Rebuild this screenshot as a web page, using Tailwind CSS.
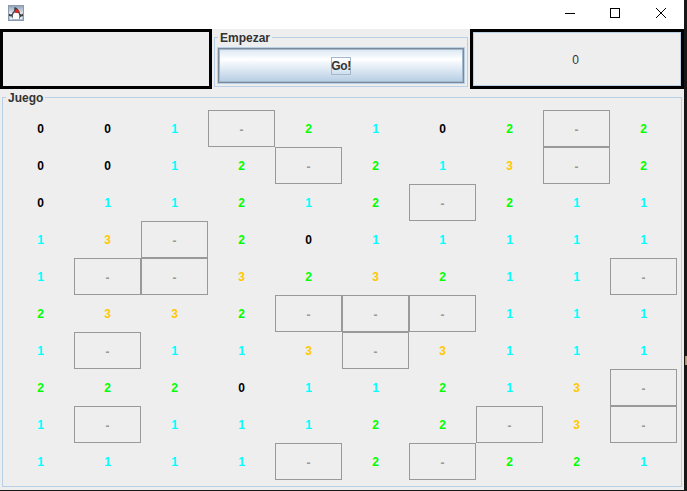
<!DOCTYPE html>
<html lang="es">
<head>
<meta charset="utf-8">
<title>Juego</title>
<script src="https://cdn.jsdelivr.net/npm/@tailwindcss/browser@4"></script>
</head>
<body class="w-[687px] h-[491px] overflow-hidden bg-[#171717] font-['Liberation_Sans',Arial,sans-serif] text-[12px] leading-[14px] text-[#333333]">
<div class="flex">
  <div class="w-[684px] h-[490px] bg-[#eeeeee] flex flex-col">
    <header class="h-[29px] shrink-0 bg-white flex justify-between pl-2">
      <svg class="w-4 h-4 mt-[5px]" viewBox="0 0 16 16">
        <defs><linearGradient id="g" x1="0" y1="0" x2="0" y2="1"><stop offset="0" stop-color="#8fa3b9"/><stop offset=".5" stop-color="#dde3ea"/><stop offset="1" stop-color="#9fb2c6"/></linearGradient></defs>
        <rect x=".5" y=".5" width="15" height="15" fill="url(#g)" stroke="#8a9bb0"/>
        <path d="M6.5 2L9 3L11.5 6.5L12 9L14 9.5L15 8.5V11L12.5 12L12 13.5H4.5L4 11.5L1 11V9L3.5 8.5L6 6Z" fill="#3c3f44"/>
        <path d="M6 7.5L10.5 8L11.5 11L11 14L5 14L4.8 10.5Z" fill="#fbfbfb"/>
        <path d="M1.5 8L3.5 7.5L4.5 9L2.5 9.5ZM2 12L5 13L4 14.5H2ZM12 12.5L14 11.5V14H12Z" fill="#eef1f5"/>
        <ellipse cx="8.8" cy="6.2" rx="2" ry="1.9" fill="#e52520"/>
      </svg>
      <svg class="w-[138px] h-[29px]" viewBox="0 0 138 29" fill="none" stroke="#000" shape-rendering="crispEdges">
        <path d="M19 13.5H29"/>
        <rect x="64.5" y="8.5" width="9" height="9"/>
        <path d="M110 8L120 18M120 8L110 18" shape-rendering="auto"/>
      </svg>
    </header>
    <section class="flex h-[60px] shrink-0">
      <div class="w-[212px] border-[3px] border-black"></div>
      <div class="w-[258px] px-[2px] pt-[8px] pb-[2px]">
        <fieldset class="relative w-[254px] h-[50px] border border-[#b8cfe5] pl-[2px] pt-[9px]">
          <div class="absolute left-[3px] -top-[7px] bg-[#eeeeee] px-[2px] font-bold">Empezar</div>
          <button class="w-[248px] h-[37px] border border-[#b8cfe5] font-bold">
            <span class="flex w-full h-full border border-[#7a8a99]">
              <span class="flex items-center justify-center w-full h-full border border-[#a3b8cc] bg-linear-to-b from-[#dde8f3] via-white via-30% to-[#b8cfe5]">
                <span class="flex items-center justify-center w-[20px] h-[18px] border border-[#a3b8cc] tracking-[-0.3px]">Go!</span>
              </span>
            </span>
          </button>
        </fieldset>
      </div>
      <div class="w-[214px] border-[3px] border-black"><div class="w-full h-full border border-[#b8cfe5] flex items-center justify-center pr-[3px] pt-[2px]">0</div></div>
    </section>
    <main class="pt-[8px] pl-[2px]">
      <fieldset class="relative w-[680px] h-[390px] border border-[#b8cfe5] pl-[4px] pt-[12px]">
        <div class="absolute left-[3px] -top-[7px] bg-[#eeeeee] px-[2px] font-bold">Juego</div>
        <div id="board" class="grid grid-cols-[repeat(10,67px)] grid-rows-[repeat(10,37px)] font-bold"></div>
      </fieldset>
    </main>
  </div>
  <div class="w-[3px] h-[491px] pl-px pt-[356px]"><div class="w-[2px] h-[9px] bg-linear-to-r from-[#6d86a3] to-[#d9ad72]"></div></div>
</div>
<script>
// One string per board row; "-" is a covered cell.
const board = [
  "001-2102-2",
  "0012-213-2",
  "011212-211",
  "13-2011111",
  "1--323211-",
  "2332---111",
  "1-113-3111",
  "222011213-",
  "1-11122-3-",
  "1111-2-221"
];
const styles = {
  "0": "flex items-center justify-center text-black",
  "1": "flex items-center justify-center text-[#00ffff]",
  "2": "flex items-center justify-center text-[#00ff00]",
  "3": "flex items-center justify-center text-[#ffc800]",
  "-": "flex items-center justify-center pt-[2px] border border-[#999999] text-[#999999]"
};
for (const c of board.join("")) {
  const cell = document.createElement("div");
  cell.className = styles[c];
  cell.textContent = c;
  document.getElementById("board").append(cell);
}
</script>
</body>
</html>
